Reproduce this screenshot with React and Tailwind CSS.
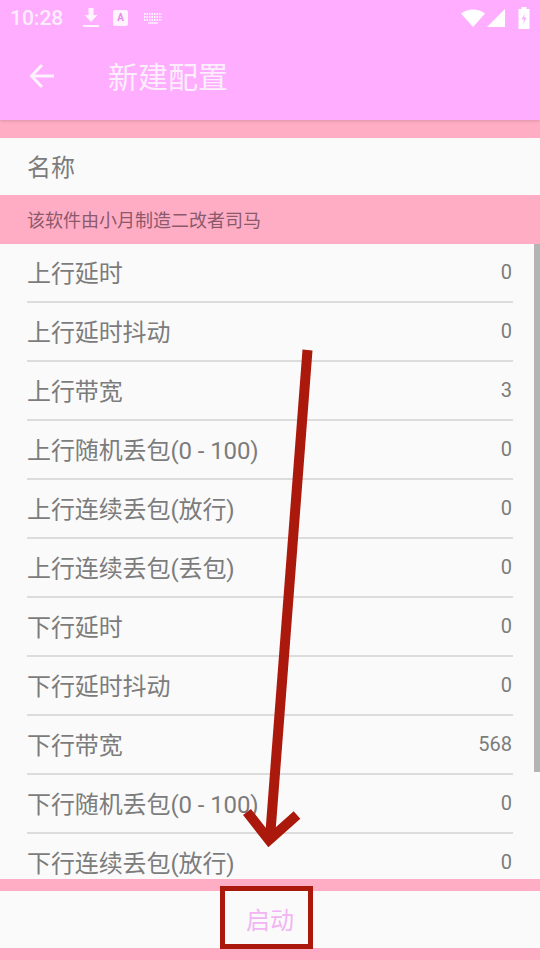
import React from "react";

const rows = [
  ["上行延时", "0"],
  ["上行延时抖动", "0"],
  ["上行带宽", "3"],
  ["上行随机丢包(0 - 100)", "0"],
  ["上行连续丢包(放行)", "0"],
  ["上行连续丢包(丢包)", "0"],
  ["下行延时", "0"],
  ["下行延时抖动", "0"],
  ["下行带宽", "568"],
  ["下行随机丢包(0 - 100)", "0"],
  ["下行连续丢包(放行)", "0"],
];

function Row({ label, value }) {
  return (
    <div className="h-[59px] shrink-0 mx-[27px] flex items-center justify-between border-b-2 border-[#dcdcdc]">
      <span className="text-[24px] tracking-[-0.1px] text-[#7c7c7c] leading-none pt-[3px]">{label}</span>
      <span className="text-[20px] text-[#7c7c7c] leading-none pb-[2px] pr-[1px]">{value}</span>
    </div>
  );
}

export default function App() {
  return (
    <div className="relative w-[540px] h-[960px] overflow-hidden flex flex-col bg-[#fafafa] font-['Roboto','Noto_Sans_CJK_SC',sans-serif]">
      <header className="h-[120px] shrink-0 bg-[#ffadff] flex flex-col shadow-[0_1px_3px_rgba(0,0,0,0.15)] z-10">
        <div className="h-[36px] flex items-center pl-[10px] pr-[10px] text-white">
          <span className="text-[21px] leading-none text-[#fdeefd] font-medium w-[71px]">10:28</span>
          <svg width="20" height="24" viewBox="0 0 20 24">
            <path d="M7.500 2h5v7h4l-6.500 7-6.500-7h4z" fill="#fff3ff" />
            <rect x="2" y="19" width="16" height="2" fill="#fff3ff" />
          </svg>
          <span className="ml-[12px] w-[15px] h-[16px] rounded-[2px] bg-[#fff3ff] flex items-center justify-center text-[10px] font-bold leading-none text-[#e58ee5]">A</span>
          <svg width="20" height="12" viewBox="0 0 20 12" className="ml-[15px]">
            <path d="M1 2h18M1 5h18M1 8h18" stroke="#fff3ff" strokeWidth="2" strokeDasharray="1.500 1" />
            <path d="M5 11h10" stroke="#fff3ff" strokeWidth="1.500" />
          </svg>
          <div className="ml-auto flex items-center">
            <svg width="24" height="18" viewBox="0 0 24 18"><path d="M0 4.500C7 -0.800 17 -0.800 24 4.500L12 18z" fill="#fff" /></svg>
            <svg width="20" height="18" viewBox="0 0 20 18" className="ml-[1px]"><path d="M19 0v18H1z" fill="#fff" /></svg>
            <svg width="12" height="22" viewBox="0 0 12 22" className="ml-[12px]">
              <path d="M3.500 0h5v2h3v20h-11v-20h3z" fill="#fff" />
              <path d="M7 6l-3.500 6.500h2.500l-1 5 3.500-7h-2.500z" fill="#ffadff" />
            </svg>
          </div>
        </div>
        <div className="flex-1 flex items-center">
          <svg width="28" height="28" viewBox="0 0 28 28" className="ml-[28px] -mt-[4px]" fill="none" stroke="#fdf2fd" strokeWidth="3">
            <path d="M26 14H4M14 3 3.500 14 14 25" />
          </svg>
          <span className="ml-[52px] text-[30px] leading-none text-[#fdeefd]">新建配置</span>
        </div>
      </header>

      <div className="h-[18px] shrink-0 bg-[#ffadc4]" />
      <div className="h-[57px] shrink-0 pl-[27px] pt-[3px] flex items-center text-[24px] leading-none text-[#7c7c7c]">名称</div>
      <div className="h-[49px] shrink-0 pl-[27px] pt-[3px] flex items-center bg-[#ffadc4] text-[18px] leading-none text-[#8a5a6c]">该软件由小月制造二改者司马</div>

      <div className="relative flex-1 min-h-0 overflow-hidden">
        {rows.map(([l, v]) => <Row key={l} label={l} value={v} />)}
        <div className="absolute right-0 top-0 w-[6px] h-[528px] bg-[#b4b4b4]" />
      </div>

      <div className="h-[12px] shrink-0 bg-[#ffadc4]" />
      <div className="h-[57px] shrink-0 pt-[3px] flex items-center justify-center text-[24px] leading-none text-[#f3b4f3]">启动</div>
      <div className="h-[12px] shrink-0 bg-[#ffadc4]" />

      <svg width="540" height="960" viewBox="0 0 540 960" className="absolute left-0 top-0 pointer-events-none z-20" fill="none" stroke="#ab180c">
        <path d="M307.500 350 270 838" strokeWidth="10" />
        <path d="M247 812 269 840 297 815" strokeWidth="10" />
      </svg>
      <div className="absolute left-[220px] top-[886px] w-[93px] h-[63px] border-[5px] border-[#ab180c] z-20" />
    </div>
  );
}
